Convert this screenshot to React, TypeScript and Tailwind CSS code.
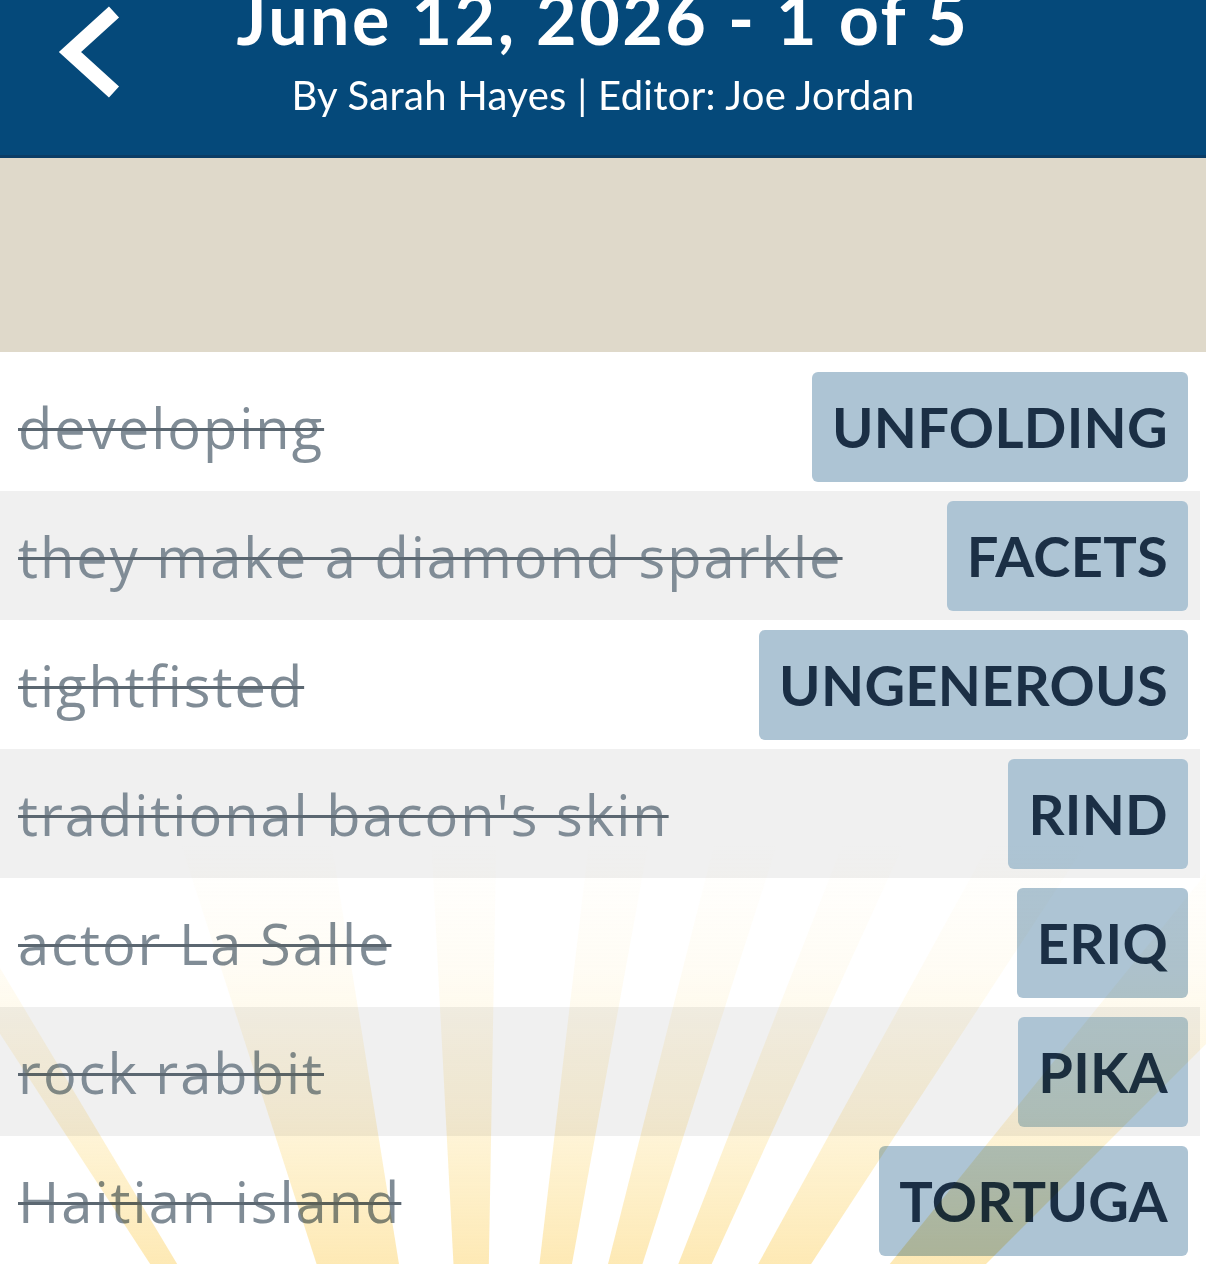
import React from "react";

const clues = [
  { clue: "developing", answer: "UNFOLDING" },
  { clue: "they make a diamond sparkle", answer: "FACETS" },
  { clue: "tightfisted", answer: "UNGENEROUS" },
  { clue: "traditional bacon's skin", answer: "RIND" },
  { clue: "actor La Salle", answer: "ERIQ" },
  { clue: "rock rabbit", answer: "PIKA" },
  { clue: "Haitian island", answer: "TORTUGA" },
];

// [angle from vertical in degrees, half width in degrees]
const rays: [number, number][] = [
  [-32, 1.1],
  [-13.5, 4.4],
  [-1, 2],
  [8.5, 1.8],
  [16, 1.8],
  [23, 1.6],
  [31, 2.2],
  [42, 3],
];

function Sunburst() {
  const cx = 480;
  const cy = 926;
  const r = 1400;
  const pt = (deg: number) => {
    const a = (deg * Math.PI) / 180;
    return `${cx + Math.sin(a) * r},${cy - Math.cos(a) * r}`;
  };
  return (
    <svg
      className="pointer-events-none absolute bottom-0 left-0 h-[420px] w-full mix-blend-multiply"
      viewBox="0 0 1206 420"
      preserveAspectRatio="none"
    >
      <defs>
        <linearGradient id="ray" x1="0" y1="0" x2="0" y2="420" gradientUnits="userSpaceOnUse">
          <stop offset="0" stopColor="#fde6a4" stopOpacity="0" />
          <stop offset="0.3" stopColor="#fde6a4" stopOpacity="0.12" />
          <stop offset="0.65" stopColor="#fde6a4" stopOpacity="0.4" />
          <stop offset="1" stopColor="#fde3a0" stopOpacity="0.78" />
        </linearGradient>
      </defs>
      {rays.map(([a, w]) => (
        <polygon key={a} points={`${cx},${cy} ${pt(a - w)} ${pt(a + w)}`} fill="url(#ray)" />
      ))}
    </svg>
  );
}

export default function App() {
  return (
    <div className="relative h-[1264px] w-[1206px] overflow-hidden bg-white font-['Lato',sans-serif]">
      {/* Header */}
      <header className="relative flex h-[158px] flex-col items-center border-b-[3px] border-[#0b3d66] bg-[#05497a] text-white">
        <svg className="absolute left-[58px] top-[6px] h-[92px] w-[66px]" viewBox="0 0 66 92">
          <path d="M56 6 L12 46 L56 86" fill="none" stroke="white" strokeWidth="15" strokeLinejoin="miter" />
        </svg>
        <h1 className="mt-[-17px] text-[70px] font-bold leading-none tracking-[2.5px]">June 12, 2026 - 1 of 5</h1>
        <p className="mt-[22px] text-[40px] leading-none tracking-[0.3px]">By Sarah Hayes | Editor: Joe Jordan</p>
      </header>

      {/* Banner */}
      <div className="h-[194px] bg-[#dfd9ca]" />

      {/* Clues */}
      <div className="pr-[6px] pt-[10px]">
        {clues.map((c, i) => (
          <div
            key={c.answer}
            className={`flex h-[129px] items-center justify-between pl-[18px] pr-[12px] ${
              i % 2 === 1 ? "bg-[#f0f0f0]" : "bg-white"
            }`}
          >
            <span className="font-['Open_Sans',sans-serif] text-[56px] leading-none tracking-[2px] text-[#808c96] line-through decoration-[#5b6771] decoration-[3px]">
              {c.clue}
            </span>
            <span className="flex h-[110px] items-center rounded-[6px] bg-[#adc4d4] px-[20px] text-[56px] font-bold leading-none tracking-[0.3px] text-[#1b2f45]">
              {c.answer}
            </span>
          </div>
        ))}
      </div>

      <Sunburst />
    </div>
  );
}
